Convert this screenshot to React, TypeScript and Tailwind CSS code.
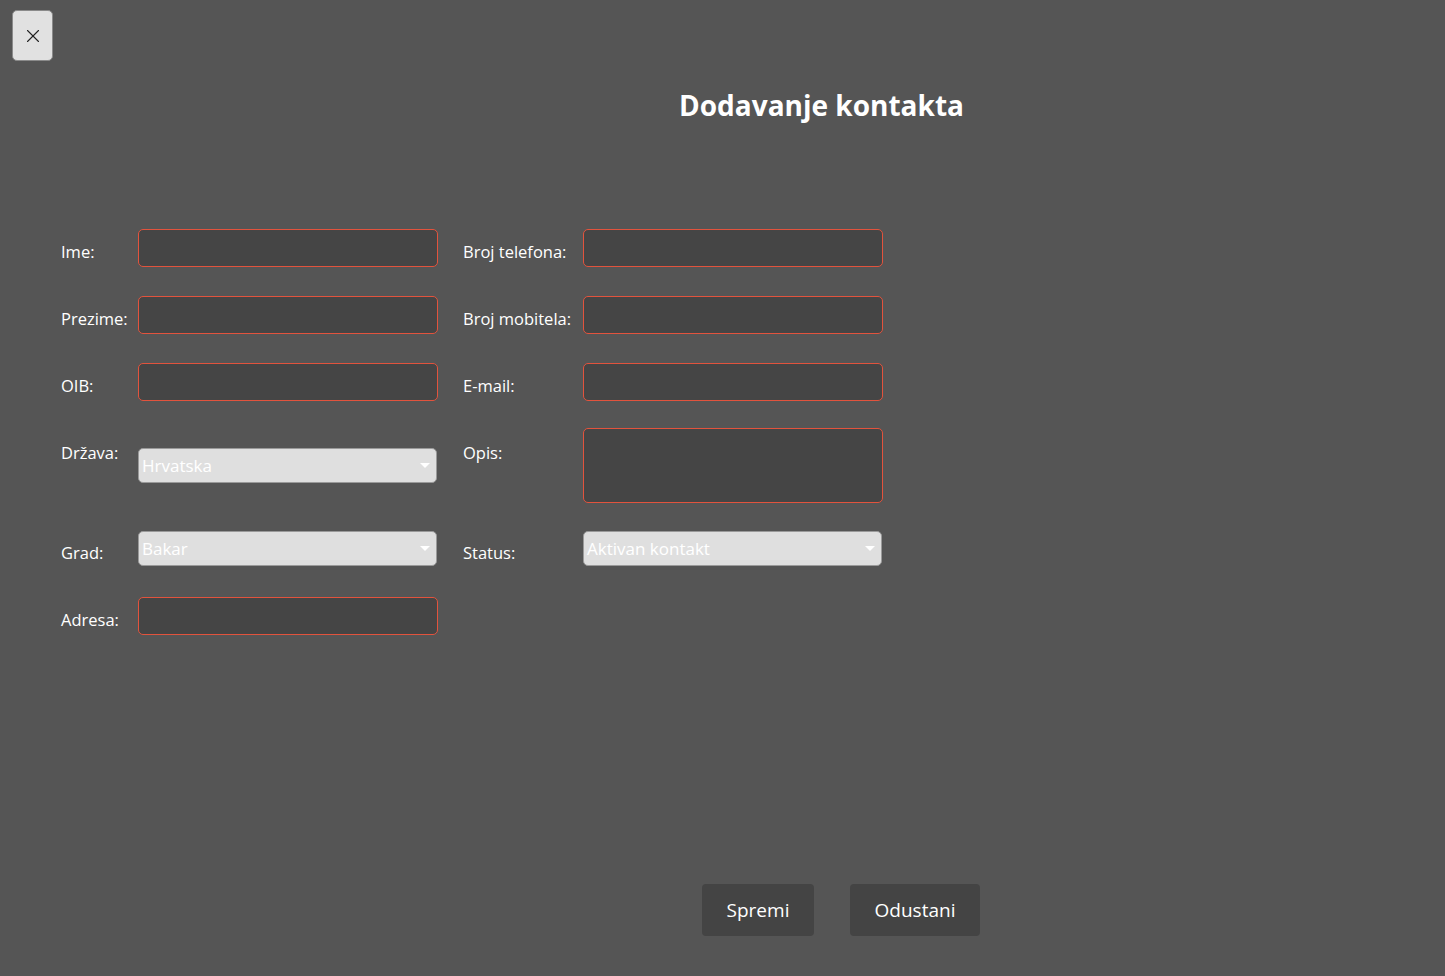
import { X } from 'lucide-react';

const font = { fontFamily: '"Open Sans", "Liberation Sans", sans-serif' };

function TextBox({ tall }: { tall?: boolean }) {
  return (
    <div
      className={`w-[300px] ${tall ? 'h-[75px]' : 'h-[38px]'} rounded-[5px] border border-[#e2533d] bg-[#454545]`}
    />
  );
}

function Select({ value }: { value: string }) {
  return (
    <div className="relative flex h-[35px] w-[299px] items-center rounded-[5px] border border-[#9a9a9a] bg-[#dfdfdf] pl-[3px] text-[17px] text-white">
      {value}
      <span className="absolute right-[6px] top-[14px] h-0 w-0 border-x-[5px] border-t-[5px] border-x-transparent border-t-white" />
    </div>
  );
}

function Label({ children, top }: { children: string; top?: string }) {
  return (
    <div className={`text-[16.5px] leading-[24px] text-white ${top ?? 'mt-[7px] self-center'}`}>{children}</div>
  );
}

export default function App() {
  return (
    <div className="flex h-[976px] w-full flex-col bg-[#555555]" style={font}>
      <div className="pl-[12px] pt-[10px]">
        <button className="flex h-[51px] w-[41px] items-center justify-center rounded-[5px] border border-[#8a8a8a] bg-[#e1e1e1] text-[#222]">
          <X size={22} strokeWidth={1.2} />
        </button>
      </div>

      <h1 className="mt-[25px] pl-[198px] text-center text-[28px] font-bold leading-[38px] text-white">
        Dodavanje kontakta
      </h1>

      {/* Form */}
      <div className="mt-[105px] grid grid-cols-[77px_325px_120px_300px] gap-y-[29px] pl-[61px]">
        <Label>Ime:</Label>
        <TextBox />
        <Label>Broj telefona:</Label>
        <TextBox />

        <Label>Prezime:</Label>
        <TextBox />
        <Label>Broj mobitela:</Label>
        <TextBox />

        <Label>OIB:</Label>
        <TextBox />
        <Label>E-mail:</Label>
        <TextBox />

        <Label top="mt-[11px] self-start">Država:</Label>
        <div className="self-start pt-[18px]">
          <Select value="Hrvatska" />
        </div>
        <Label top="mt-[11px] self-start">Opis:</Label>
        <div className="-mt-[2px] -mb-[1px]">
          <TextBox tall />
        </div>

        <Label>Grad:</Label>
        <div className="self-start pb-[2px]">
          <Select value="Bakar" />
        </div>
        <Label top="mt-[6px] self-center">Status:</Label>
        <div className="self-start">
          <Select value="Aktivan kontakt" />
        </div>

        <Label>Adresa:</Label>
        <TextBox />
      </div>

      <div className="mt-auto mb-[40px] flex gap-[36px] pl-[702px]">
        <button className="h-[52px] w-[112px] rounded-[4px] bg-[#444444] text-[19px] text-white">Spremi</button>
        <button className="h-[52px] w-[130px] rounded-[4px] bg-[#444444] text-[19px] text-white">Odustani</button>
      </div>
    </div>
  );
}
